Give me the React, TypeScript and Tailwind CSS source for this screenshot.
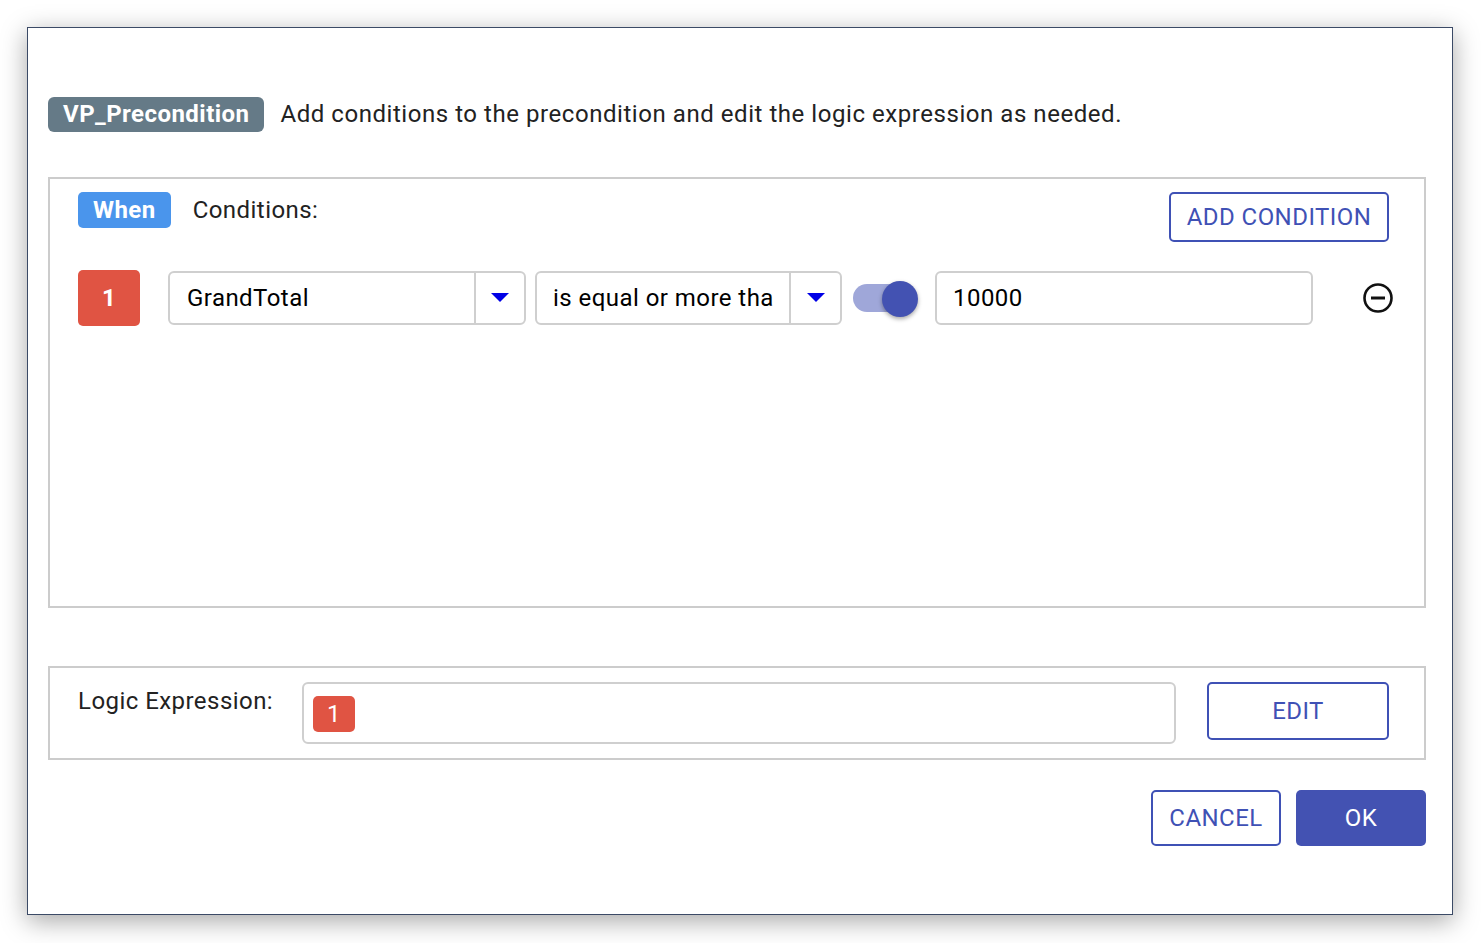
import React from "react";

function Caret() {
  return (
    <svg width="18" height="10" viewBox="0 0 18 10">
      <path d="M0 0 L18 0 L9 9 Z" fill="#0000e6" />
    </svg>
  );
}

export default function App() {
  return (
    <div className="w-[1481px] h-[943px] bg-white pt-[27px] pl-[27px]" style={{ fontFamily: "Roboto, 'Liberation Sans', sans-serif" }}>
      <div className="w-[1426px] h-[888px] border border-[#3b4a66] bg-white shadow-[0_6px_24px_rgba(0,0,0,0.35)] flex flex-col pl-[20px] pr-[26px] text-[24px] tracking-[0.45px]">
        <div className="flex items-center mt-[68px] h-[36px]">
          <span className="bg-[#657a87] text-white font-bold leading-[35px] px-[15px] rounded-[6px]">VP_Precondition</span>
          <span className="ml-[16px] text-[#222] tracking-[0.55px]">Add conditions to the precondition and edit the logic expression as needed.</span>
        </div>

        <div className="mt-[45px] h-[431px] border-2 border-[#cccccc] pl-[28px] pr-[35px] pt-[13px]">
          <div className="flex items-start justify-between">
            <div className="flex items-center">
              <span className="bg-[#4a95ec] text-white font-bold leading-[36px] px-[15px] rounded-[5px]">When</span>
              <span className="ml-[22px] text-[#222]">Conditions:</span>
            </div>
            <button className="w-[220px] h-[50px] border-2 border-[#3f51b5] rounded-[5px] text-[#3f51b5]">ADD CONDITION</button>
          </div>
          <div className="flex items-center mt-[28px] h-[56px]">
            <div className="w-[62px] h-[56px] bg-[#e05443] rounded-[5px] text-white font-bold flex items-center justify-center">1</div>
            <div className="ml-[28px] w-[358px] h-[54px] border-2 border-[#cfcfcf] rounded-[6px] flex items-center">
              <span className="flex-1 pl-[17px] text-black">GrandTotal</span>
              <div className="w-[50px] h-full border-l-2 border-[#cfcfcf] flex items-center justify-center"><Caret /></div>
            </div>
            <div className="ml-[9px] w-[307px] h-[54px] border-2 border-[#cfcfcf] rounded-[6px] flex items-center">
              <span className="flex-1 pl-[16px] text-black whitespace-nowrap overflow-hidden">is equal or more tha</span>
              <div className="w-[51px] h-full border-l-2 border-[#cfcfcf] flex items-center justify-center"><Caret /></div>
            </div>
            <div className="ml-[11px] relative w-[66px] h-[40px]">
              <div className="absolute left-0 top-[6px] w-[56px] h-[28px] rounded-full bg-[#9fa7d9]" />
              <div className="absolute left-[29px] top-[3px] w-[36px] h-[36px] rounded-full bg-[#4352b2] shadow-[0_2px_4px_rgba(0,0,0,0.35)]" />
            </div>
            <div className="ml-[16px] w-[378px] h-[54px] border-2 border-[#cfcfcf] rounded-[6px] flex items-center pl-[16px] text-black">10000</div>
            <div className="ml-auto mr-[-5px] w-[32px] h-[32px] flex items-center justify-center">
              <svg width="30" height="30" viewBox="0 0 30 30">
                <circle cx="15" cy="15" r="13.5" fill="none" stroke="#111" strokeWidth="2.6" />
                <line x1="8" y1="15" x2="22" y2="15" stroke="#111" strokeWidth="3" />
              </svg>
            </div>
          </div>
        </div>

        <div className="mt-[58px] h-[94px] border-2 border-[#cccccc] flex items-start pl-[28px] pr-[35px] pt-[14px]">
          <span className="text-[#222] mt-[1px] w-[224px]">Logic Expression:</span>
          <div className="w-[874px] h-[62px] border-2 border-[#cfcfcf] rounded-[6px] flex items-center pl-[9px]">
            <span className="bg-[#e05443] text-white w-[42px] h-[36px] rounded-[5px] flex items-center justify-center mt-[2px]">1</span>
          </div>
          <button className="ml-auto w-[182px] h-[58px] border-2 border-[#3f51b5] rounded-[5px] text-[#3f51b5]">EDIT</button>
        </div>

        <div className="flex justify-end mt-[30px] gap-[15px]">
          <button className="w-[130px] h-[56px] border-2 border-[#3f51b5] rounded-[5px] text-[#3f51b5]">CANCEL</button>
          <button className="w-[130px] h-[56px] bg-[#4352b2] rounded-[5px] text-white">OK</button>
        </div>
      </div>
    </div>
  );
}
